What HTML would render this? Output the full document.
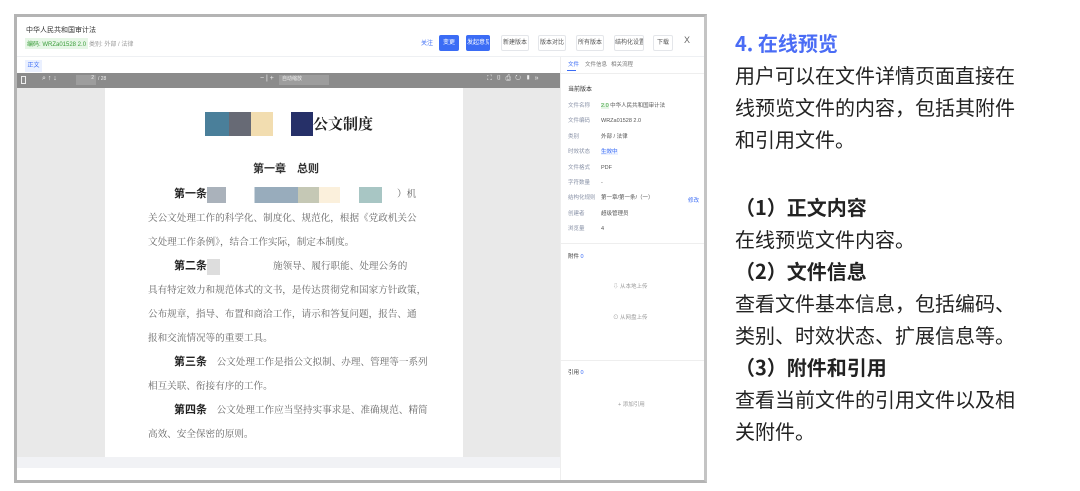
<!DOCTYPE html><html><head><meta charset="utf-8"><style>
*{margin:0;padding:0;box-sizing:border-box}
body{width:1080px;height:491px;background:#fff;position:relative;overflow:hidden;font-family:"Liberation Sans","Noto Sans CJK SC",sans-serif}
.a{position:absolute}
.frame{left:14px;top:14px;width:693px;height:469px;border:3px solid #b4b4b4;border-right-color:#c4c4c4;background:#fff;overflow:hidden}
.btn{position:absolute;top:18px;height:16px;font-size:6px;line-height:14px;text-align:center;border:1px solid #e4e6ea;color:#555;background:#fff;border-radius:2px;white-space:nowrap;overflow:hidden}
.doc{font-family:"Noto Serif CJK SC","Liberation Serif",serif;font-size:9.6px;color:#666;line-height:24px;white-space:nowrap}
.doc b{color:#222;font-family:"Noto Sans CJK SC",sans-serif;font-weight:bold;font-size:11px}
.rp{font-size:5.5px;color:#777;white-space:nowrap}
.rt{position:absolute;left:735px;font-size:20px;color:#222;font-family:"Noto Sans CJK SC",sans-serif;line-height:32px;white-space:nowrap}
</style></head><body>
<div class="a frame">
 <div class="a" style="left:9px;top:8px;font-size:7px;color:#333">中华人民共和国审计法</div>
 <div class="a" style="left:8px;top:21px;font-size:6px;color:#3a9d3a;background:#e6f6e6;padding:1px 2px">编码: WRZa01528 2.0</div>
 <div class="a" style="left:72px;top:22px;font-size:6px;color:#999">类别: 外部 / 法律</div>
 <div class="a" style="left:404px;top:21px;font-size:6px;color:#3b6cf5">关注</div>
 <div class="btn" style="left:422px;width:20px;background:#3b6cf5;color:#fff;border-color:#3b6cf5">变更</div>
 <div class="btn" style="left:449px;width:24px;background:#3b6cf5;color:#fff;border-color:#3b6cf5">发起意见</div>
 <div class="btn" style="left:484px;width:28px">新建版本</div>
 <div class="btn" style="left:521px;width:28px">版本对比</div>
 <div class="btn" style="left:559px;width:28px">所有版本</div>
 <div class="btn" style="left:597px;width:30px">结构化设置</div>
 <div class="btn" style="left:636px;width:20px">下载</div>
 <div class="a" style="left:667px;top:18px;font-size:9px;color:#666">X</div>
 <div class="a" style="left:0;top:39px;width:690px;height:1px;background:#eef0f3"></div>
 <div class="a" style="left:8px;top:43px;width:17px;height:12px;background:#eaf0ff;font-size:6px;color:#3b6cf5;text-align:center;line-height:12px">正文</div>
 <div class="a" style="left:0;top:56px;width:543px;height:384px;background:#e9e9e9"></div>
 <div class="a" style="left:0;top:56px;width:543px;height:15px;background:#8b8b8b;color:#eee;font-size:7px;white-space:nowrap">
  <span class="a" style="left:4px;top:3px;width:5px;height:8px;border:1px solid #eee"></span>
  <span class="a" style="left:25px;top:2px">⌕ ↑ ↓</span>
  <span class="a" style="left:59px;top:2px;width:20px;height:10px;background:#9d9d9d;font-size:5px;text-align:right;padding-right:2px">2</span>
  <span class="a" style="left:81px;top:3px;font-size:5px">/ 28</span>
  <span class="a" style="left:243px;top:2px">− | +</span>
  <span class="a" style="left:262px;top:2px;width:50px;height:10px;background:#9d9d9d;font-size:5px;padding-left:3px">自动缩放</span>
  <span class="a" style="left:470px;top:2px;letter-spacing:4px">⛶▯⎙↻▮»</span>
 </div>
 <div class="a doc" style="left:88px;top:71px;width:358px;height:369px;background:#fff;overflow:hidden">
  <div class="a" style="left:100px;top:24px;width:24px;height:24px;background:#4a7f9a"></div>
  <div class="a" style="left:124px;top:24px;width:22px;height:24px;background:#676a75"></div>
  <div class="a" style="left:146px;top:24px;width:22px;height:24px;background:#f2ddb0"></div>
  <div class="a" style="left:186px;top:24px;width:22px;height:24px;background:#263068"></div>
  <div class="a" style="left:208px;top:21px;font-size:15px;color:#222;font-weight:bold;line-height:30px">公文制度</div>
  <div class="a" style="left:148px;top:68px;font-size:11px;color:#333;font-weight:bold;font-family:'Noto Sans CJK SC',sans-serif">第一章　总则</div>
  <div class="a" style="left:43px;top:93px;width:300px">
   <div style="padding-left:26px"><b>第一条</b><span style="display:inline-block;width:190px;height:16px;vertical-align:middle;background:linear-gradient(90deg,#aab2bb 0 10%,#fff 10% 25%,#98acbc 25% 48%,#c5c8b5 48% 59%,#fbf0dc 59% 70%,#fff 70% 80%,#a8c6c4 80% 92%,#fff 92%)"></span>）机</div>
   <div>关公文处理工作的科学化、制度化、规范化，根据《党政机关公</div>
   <div>文处理工作条例》，结合工作实际，制定本制度。</div>
   <div style="padding-left:26px"><b>第二条</b><span style="display:inline-block;width:66px;height:16px;vertical-align:middle;background:linear-gradient(90deg,#ddd 0 20%,#fff 20%)"></span>施领导、履行职能、处理公务的</div>
   <div>具有特定效力和规范体式的文书，是传达贯彻党和国家方针政策，</div>
   <div>公布规章，指导、布置和商洽工作，请示和答复问题，报告、通</div>
   <div>报和交流情况等的重要工具。</div>
   <div style="padding-left:26px"><b>第三条</b>　公文处理工作是指公文拟制、办理、管理等一系列</div>
   <div>相互关联、衔接有序的工作。</div>
   <div style="padding-left:26px"><b>第四条</b>　公文处理工作应当坚持实事求是、准确规范、精简</div>
   <div>高效、安全保密的原则。</div>
  </div>
 </div>
 <div class="a" style="left:0;top:440px;width:543px;height:11px;background:#f1f2f5"></div>
 <div class="a" style="left:543px;top:40px;width:1px;height:430px;background:#eee"></div>
 <div class="a rp" style="left:551px;top:43px;color:#3b6cf5">文件</div>
 <div class="a" style="left:550px;top:53px;width:9px;height:1px;background:#3b6cf5"></div>
 <div class="a rp" style="left:568px;top:43px">文件信息</div>
 <div class="a rp" style="left:594px;top:43px">相关流程</div>
 <div class="a" style="left:544px;top:56px;width:146px;height:1px;background:#eee"></div>
 <div class="a rp" style="left:551px;top:67px;color:#333;font-size:6px">当前版本</div>
 <div class="a rp" style="left:551px;top:82px;line-height:15.4px;color:#8a93a8">文件名称<br>文件编码<br>类别<br>时效状态<br>文件格式<br>字符数量<br>结构化规则<br>创建者<br>浏览量</div>
 <div class="a rp" style="left:584px;top:82px;line-height:15.4px;color:#555"><span style="color:#3a9d3a;background:#e6f6e6">2.0</span> 中华人民共和国审计法<br>WRZa01528 2.0<br>外部 / 法律<br><span style="color:#3b6cf5;background:#eaf0ff">生效中</span><br>PDF<br>-<br>第一章/第一条/（一）<br>超级管理员<br>4</div>
 <div class="a rp" style="left:671px;top:179px;color:#3b6cf5">修改</div>
 <div class="a" style="left:544px;top:226px;width:146px;height:1px;background:#eee"></div>
 <div class="a rp" style="left:551px;top:235px;color:#333">附件 <span style="color:#3b6cf5">0</span></div>
 <div class="a rp" style="left:596px;top:265px;color:#999">⇩ 从本地上传</div>
 <div class="a rp" style="left:596px;top:296px;color:#999">⊙ 从网盘上传</div>
 <div class="a" style="left:544px;top:343px;width:146px;height:1px;background:#eee"></div>
 <div class="a rp" style="left:551px;top:351px;color:#333">引用 <span style="color:#3b6cf5">0</span></div>
 <div class="a rp" style="left:601px;top:383px;color:#999">+ 添加引用</div>
</div>
<div class="rt" style="top:27px;color:#4a6cf5;font-weight:bold">4. 在线预览</div>
<div class="rt" style="top:59px">用户可以在文件详情页面直接在<br>线预览文件的内容，包括其附件<br>和引用文件。</div>
<div class="rt" style="top:191px;font-weight:bold">（1）正文内容</div>
<div class="rt" style="top:223px">在线预览文件内容。</div>
<div class="rt" style="top:255px;font-weight:bold">（2）文件信息</div>
<div class="rt" style="top:287px">查看文件基本信息，包括编码、<br>类别、时效状态、扩展信息等。</div>
<div class="rt" style="top:351px;font-weight:bold">（3）附件和引用</div>
<div class="rt" style="top:383px">查看当前文件的引用文件以及相<br>关附件。</div>
</body></html>
